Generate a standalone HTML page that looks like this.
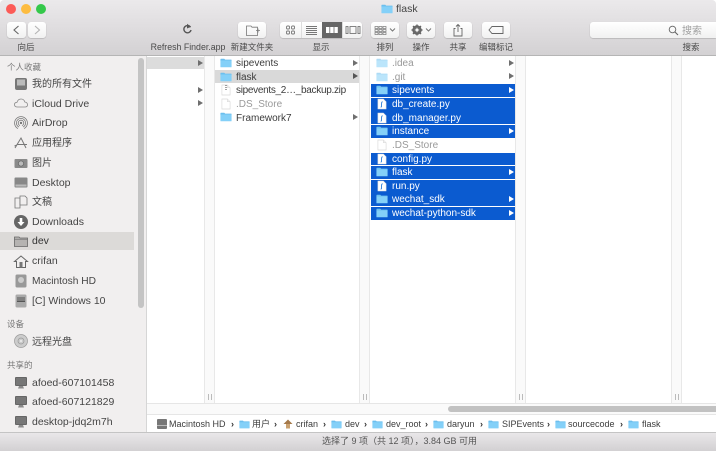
<!DOCTYPE html>
<html><head><meta charset="utf-8"><style>
*{box-sizing:border-box}
html,body{margin:0;padding:0}
html{background:#fff}
body{width:716px;height:451px;overflow:hidden;position:relative;background:#fff;font-family:"Liberation Sans","Noto Sans CJK SC",sans-serif;color:#333;filter:blur(.3px)}
.a{position:absolute}
.t{position:absolute;white-space:nowrap;font-size:10px;line-height:14px;color:#3c3c3c;margin-top:1px}
.tb{position:absolute;white-space:nowrap;font-size:8.5px;line-height:12px;color:#4a4a4a;transform:translateX(-50%)}
.btn{position:absolute;background:linear-gradient(#fff,#f1f1f1);border-radius:3px;box-shadow:0 0.5px 1px rgba(0,0,0,.25);top:22px;height:16px}
.s{position:absolute;left:32px;white-space:nowrap;font-size:10.5px;line-height:14px;color:#454545}
.z{font-size:10px;margin-top:1px}
.h{position:absolute;left:7px;white-space:nowrap;font-size:8.5px;line-height:12px;color:#777}
.sel{position:absolute;left:371px;width:144px;height:12.5px;background:#0b5bd0}
.w{color:#fff}
.ar{position:absolute;width:0;height:0;border-left:5px solid #6f6f6f;border-top:3px solid transparent;border-bottom:3px solid transparent}
.ic{position:absolute;overflow:visible}
.p{position:absolute;top:418px;white-space:nowrap;font-size:9px;line-height:13px;color:#3c3c3c}
.c{position:absolute;top:419px;font-size:9px;line-height:10px;color:#333;font-weight:bold}
</style></head><body>
<svg width="0" height="0" style="position:absolute"><defs>
<symbol id="f" viewBox="0 0 14 11"><path d="M0.5 2V1.2Q0.5 .5 1.2 .5H5L6 1.6H13Q13.5 1.6 13.5 2.2V3H.5Z" fill="#6cbfee"/><path d="M.5 2.6H13.5V10Q13.5 10.5 13 10.5H1Q.5 10.5 .5 10Z" fill="#84d0f8"/></symbol>
<symbol id="d" viewBox="0 0 11 12"><path d="M1 .5H7L10 3.5V11.5H1Z" fill="#fff" stroke="#d8d8d8" stroke-width=".7"/><path d="M7 .5V3.5H10" fill="#f2f2f2" stroke="#d8d8d8" stroke-width=".6"/></symbol>
<symbol id="py" viewBox="0 0 11 12"><path d="M1 .5H7L10 3.5V11.5H1Z" fill="#fff" stroke="#dcdcdc" stroke-width=".6"/><path d="M6.2 3.5Q5 3.7 5 5.5V8.5Q5 9.5 4 9.3" fill="none" stroke="#2f7fd8" stroke-width="1"/></symbol>
<symbol id="mon" viewBox="0 0 14 14"><rect x="1" y="1" width="12" height="9" rx="1" fill="#666"/><rect x="2" y="2" width="10" height="7" fill="#777"/><path d="M4 12.5H10L9 10H5Z" fill="#8b8b8b"/></symbol>
</defs></svg>

<!-- toolbar -->
<div class="a" style="left:0;top:0;width:716px;height:56px;background:linear-gradient(#ebe9eb,#d3d1d3);border-bottom:1px solid #b5b5b5;border-radius:4px 4px 0 0"></div>
<div class="a" style="left:6px;top:4px;width:10px;height:10px;border-radius:50%;background:#fc5b57"></div>
<div class="a" style="left:21px;top:4px;width:10px;height:10px;border-radius:50%;background:#fdbc40"></div>
<div class="a" style="left:36px;top:4px;width:10px;height:10px;border-radius:50%;background:#34c84a"></div>
<svg class="ic" style="left:381px;top:4px" width="12" height="10"><use href="#f" width="12" height="10"/></svg>
<div class="t" style="left:396px;top:1px;font-size:10.5px;color:#444">flask</div>

<div class="btn" style="left:7px;width:19px"></div>
<div class="btn" style="left:27.5px;width:18px"></div>
<svg class="ic" style="left:7px;top:22px" width="40" height="16"><path d="M11.5 4L7 8L11.5 12" fill="none" stroke="#666" stroke-width="1.1"/><path d="M28 4L32.5 8L28 12" fill="none" stroke="#b4b4b4" stroke-width="1.1"/></svg>
<div class="tb" style="left:26px;top:41px">向后</div>

<svg class="ic" style="left:182px;top:23px" width="11" height="12"><path d="M8.5 4.2A3.6 3.6 0 1 0 9 7" fill="none" stroke="#555" stroke-width="1.4"/><path d="M5 .8L9 3.8L5 5.5Z" fill="#555"/></svg>
<div class="tb" style="left:188px;top:41px;font-size:8.8px">Refresh Finder.app</div>

<div class="btn" style="left:238px;width:28px"></div>
<svg class="ic" style="left:246px;top:25px" width="15" height="11"><path d="M.5 10.5V1H5L6 2.2H11.5V10.5Z" fill="none" stroke="#777" stroke-width=".8"/><path d="M10 5.5H14M12 3.5V7.5" stroke="#777" stroke-width=".8"/></svg>
<div class="tb" style="left:252px;top:41px">新建文件夹</div>

<div class="a" style="left:280px;top:22px;width:82px;height:16px;background:linear-gradient(#fff,#f1f1f1);border-radius:3px;box-shadow:0 0.5px 1px rgba(0,0,0,.25)"></div>
<div class="a" style="left:322px;top:22px;width:20px;height:16px;background:#666"></div>
<div class="a" style="left:301px;top:22px;width:1px;height:16px;background:#ddd"></div>
<div class="a" style="left:342px;top:22px;width:1px;height:16px;background:#ddd"></div>
<svg class="ic" style="left:280px;top:22px" width="82" height="16">
<g fill="none" stroke="#777" stroke-width=".9"><rect x="6.5" y="4" width="3" height="3" rx="1"/><rect x="11.5" y="4" width="3" height="3" rx="1"/><rect x="6.5" y="9" width="3" height="3" rx="1"/><rect x="11.5" y="9" width="3" height="3" rx="1"/>
<path d="M26 4.5H37M26 6.5H37M26 8.5H37M26 10.5H37M26 12.5H37"/>
<rect x="66" y="4.5" width="2" height="7"/><rect x="70" y="4.5" width="6" height="7"/><rect x="78" y="4.5" width="2" height="7"/></g>
<g fill="#fff"><rect x="46" y="5" width="3.4" height="6"/><rect x="50.2" y="5" width="3.4" height="6"/><rect x="54.4" y="5" width="3.4" height="6"/></g></svg>
<div class="tb" style="left:321px;top:41px">显示</div>

<div class="btn" style="left:371px;width:28px"></div>
<svg class="ic" style="left:371px;top:22px" width="28" height="16"><g fill="none" stroke="#777" stroke-width=".7"><rect x="4" y="4.5" width="3" height="2"/><rect x="8" y="4.5" width="3" height="2"/><rect x="12" y="4.5" width="3" height="2"/><rect x="4" y="7.5" width="3" height="2"/><rect x="8" y="7.5" width="3" height="2"/><rect x="12" y="7.5" width="3" height="2"/><rect x="4" y="10.5" width="3" height="2"/><rect x="8" y="10.5" width="3" height="2"/><rect x="12" y="10.5" width="3" height="2"/><path d="M19 6.5L21.5 9L24 6.5" stroke-width="1"/></g></svg>
<div class="tb" style="left:385px;top:41px">排列</div>

<div class="btn" style="left:407px;width:28px"></div>
<svg class="ic" style="left:407px;top:22px" width="28" height="16"><circle cx="10" cy="8" r="3.6" fill="none" stroke="#666" stroke-width="2.2"/><path d="M10 2.5V13.5M4.5 8H15.5M6 4L14 12M14 4L6 12" stroke="#666" stroke-width="1.4"/><circle cx="10" cy="8" r="1.6" fill="#f6f6f6"/><path d="M19 6.5L21.5 9L24 6.5" fill="none" stroke="#777"/></svg>
<div class="tb" style="left:421px;top:41px">操作</div>

<div class="btn" style="left:444px;width:28px"></div>
<svg class="ic" style="left:444px;top:22px" width="28" height="16"><path d="M11.5 6.5H10V14H18V6.5H16.5M14 10V2.5M12 4.5L14 2.5L16 4.5" fill="none" stroke="#666" stroke-width=".9"/></svg>
<div class="tb" style="left:458px;top:41px">共享</div>

<div class="btn" style="left:482px;width:28px"></div>
<svg class="ic" style="left:482px;top:22px" width="28" height="16"><path d="M10 4.5H21V11.5H10L7 8Z" fill="none" stroke="#666" stroke-width=".9"/></svg>
<div class="tb" style="left:496px;top:41px">编辑标记</div>

<div class="btn" style="left:590px;width:126px;border-radius:3px 0 0 3px"></div>
<svg class="ic" style="left:668px;top:25px" width="11" height="11"><circle cx="4.5" cy="4.5" r="3.3" fill="none" stroke="#666" stroke-width=".9"/><path d="M7 7L10 10" stroke="#666" stroke-width="1.1"/></svg>
<div class="t" style="left:682px;top:24px;color:#a0a0a0">搜索</div>
<div class="tb" style="left:691px;top:41px">搜索</div>

<!-- sidebar -->
<div class="a" style="left:0;top:56px;width:147px;height:395px;background:#f1efef"></div>
<div class="a" style="left:0;top:232px;width:134px;height:18px;background:#dcdad8"></div>
<div class="a" style="left:138px;top:58px;width:6px;height:250px;border-radius:3px;background:#c4c4c4"></div>
<div class="h" style="left:7px;top:61px">个人收藏</div>

<svg class="ic" style="left:14px;top:77px" width="14" height="14"><rect x="1" y="1" width="12" height="12" rx="2" fill="#777"/><rect x="3" y="2.5" width="8" height="6" fill="#bbb"/></svg>
<div class="s z" style="top:77px">我的所有文件</div>
<svg class="ic" style="left:14px;top:98px" width="14" height="10"><path d="M3.5 9Q.5 9 .5 6.5Q.5 4.5 3 4.3Q4 1 7 1Q10 1 10.8 4Q13.5 4.5 13.5 6.7Q13.5 9 11 9Z" fill="none" stroke="#888" stroke-width=".8"/></svg>
<div class="s" style="top:97px">iCloud Drive</div>
<svg class="ic" style="left:14px;top:116px" width="14" height="14"><g fill="none" stroke="#777" stroke-width=".8"><circle cx="7" cy="7" r="6.4"/><circle cx="7" cy="7" r="4.6"/><circle cx="7" cy="7" r="2.8"/></g><circle cx="7" cy="7" r="1.2" fill="#777"/><path d="M3 14L7 8L11 14Z" fill="#f1efef"/></svg>
<div class="s" style="top:116px">AirDrop</div>
<svg class="ic" style="left:14px;top:136px" width="14" height="14"><path d="M1 12L7 2L12 12M3 8.5H13M.5 10L3 9" fill="none" stroke="#777" stroke-width="1"/></svg>
<div class="s z" style="top:136px">应用程序</div>
<svg class="ic" style="left:14px;top:158px" width="14" height="10"><rect x=".5" y="1" width="13" height="9" rx="1" fill="#8a8a8a"/><circle cx="7" cy="5.5" r="2.6" fill="#bbb" stroke="#666" stroke-width=".7"/></svg>
<div class="s z" style="top:156px">图片</div>
<svg class="ic" style="left:14px;top:177px" width="14" height="11"><rect x=".5" y=".5" width="13" height="10" rx="1" fill="#888"/><rect x="1.5" y="7.5" width="11" height="2" fill="#bbb"/></svg>
<div class="s" style="top:176px">Desktop</div>
<svg class="ic" style="left:14px;top:195px" width="14" height="14"><path d="M1 3H6V13H1Z" fill="none" stroke="#777" stroke-width=".8"/><path d="M6 1H11L13 3V10H6Z" fill="#f1efef" stroke="#777" stroke-width=".8"/></svg>
<div class="s z" style="top:195px">文稿</div>
<svg class="ic" style="left:14px;top:215px" width="14" height="14"><circle cx="7" cy="7" r="7" fill="#666"/><path d="M5.7 3H8.3V7H10.5L7 11L3.5 7H5.7Z" fill="#fff"/></svg>
<div class="s" style="top:215px">Downloads</div>
<svg class="ic" style="left:14px;top:236px" width="14" height="11"><path d="M.5 10.5V1H5L6 2H13.5V10.5Z" fill="#b5b3b1" stroke="#666" stroke-width=".8"/><path d="M.5 3.2H13.5" stroke="#666" stroke-width=".6"/></svg>
<div class="s" style="top:234px;color:#333">dev</div>
<svg class="ic" style="left:14px;top:255px" width="14" height="13"><path d="M7 1L.5 6.5H2.5V12.5H11.5V6.5H13.5Z" fill="none" stroke="#666" stroke-width="1"/><rect x="5.5" y="7" width="3" height="5.5" fill="#777"/></svg>
<div class="s" style="top:254px">crifan</div>
<svg class="ic" style="left:15px;top:274px" width="12" height="14"><rect x=".5" y=".5" width="11" height="13" rx="1.5" fill="#999"/><circle cx="6" cy="6" r="3" fill="#ccc"/></svg>
<div class="s" style="top:275px;font-size:10.2px">Macintosh HD</div>
<svg class="ic" style="left:15px;top:294px" width="12" height="14"><rect x=".5" y=".5" width="11" height="13" rx="1.5" fill="#aaa"/><path d="M3 3V7M5 3V7M7 3V7M9 3V7" stroke="#555"/><rect x="2" y="7" width="8" height="1" fill="#555"/></svg>
<div class="s" style="top:294px">[C] Windows 10</div>
<div class="h" style="top:318px">设备</div>
<svg class="ic" style="left:14px;top:334px" width="14" height="14"><circle cx="7" cy="7" r="6.5" fill="#ccc" stroke="#999" stroke-width=".7"/><circle cx="7" cy="7" r="3" fill="none" stroke="#999" stroke-width=".7"/><circle cx="7" cy="7" r="1" fill="#eee"/></svg>
<div class="s z" style="top:335px">远程光盘</div>
<div class="h" style="top:359px">共享的</div>
<svg class="ic" style="left:14px;top:376px" width="14" height="14"><use href="#mon" width="14" height="14"/></svg>
<div class="s" style="top:376px">afoed-607101458</div>
<svg class="ic" style="left:14px;top:395px" width="14" height="14"><use href="#mon" width="14" height="14"/></svg>
<div class="s" style="top:395px">afoed-607121829</div>
<svg class="ic" style="left:14px;top:415px" width="14" height="14"><use href="#mon" width="14" height="14"/></svg>
<div class="s" style="top:415px">desktop-jdq2m7h</div>

<!-- columns -->
<div class="a" style="left:147px;top:56px;width:569px;height:347px;background:#fff"></div>
<div class="a" style="left:146px;top:56px;width:1px;height:376px;background:#d6d6d6"></div>
<div class="a" style="left:147px;top:57px;width:58px;height:12px;background:#dcdcdc"></div>
<div class="a" style="left:215px;top:70px;width:145px;height:13px;background:#d9d9d9"></div>

<div class="a" style="left:204px;top:56px;width:11px;height:347px;background:#fafafa;border-left:1px solid #e8e8e8;border-right:1px solid #e8e8e8"></div>
<div class="a" style="left:359px;top:56px;width:11px;height:347px;background:#fafafa;border-left:1px solid #e8e8e8;border-right:1px solid #e8e8e8"></div>
<div class="a" style="left:515px;top:56px;width:11px;height:347px;background:#fafafa;border-left:1px solid #e8e8e8;border-right:1px solid #e8e8e8"></div>
<div class="a" style="left:671px;top:56px;width:11px;height:347px;background:#fafafa;border-left:1px solid #e8e8e8;border-right:1px solid #e8e8e8"></div>
<svg class="ic" style="left:204px;top:393px" width="480" height="8"><g stroke="#bbb"><path d="M4.5 1V7M7.5 1V7M159.5 1V7M162.5 1V7M315.5 1V7M318.5 1V7M471.5 1V7M474.5 1V7"/></g></svg>

<div class="ar" style="left:198px;top:60px"></div>
<div class="ar" style="left:198px;top:87px"></div>
<div class="ar" style="left:198px;top:100px"></div>

<svg class="ic" style="left:220px;top:58px" width="12" height="10"><use href="#f" width="12" height="10"/></svg>
<div class="t" style="left:236px;top:56px">sipevents</div><div class="ar" style="left:353px;top:60px"></div>
<svg class="ic" style="left:220px;top:72px" width="12" height="10"><use href="#f" width="12" height="10"/></svg>
<div class="t" style="left:236px;top:70px">flask</div><div class="ar" style="left:353px;top:73px;border-left-color:#555"></div>
<svg class="ic" style="left:221px;top:84px" width="10" height="12"><use href="#d" width="10" height="12"/><path d="M5 1V6" stroke="#444" stroke-width="1" stroke-dasharray="1 1"/></svg>
<div class="t" style="left:236px;top:83px;letter-spacing:-.3px">sipevents_2…_backup.zip</div>
<svg class="ic" style="left:221px;top:98px" width="10" height="12"><use href="#d" width="10" height="12"/></svg>
<div class="t" style="left:236px;top:97px;color:#999">.DS_Store</div>
<svg class="ic" style="left:220px;top:112px" width="12" height="10"><use href="#f" width="12" height="10"/></svg>
<div class="t" style="left:236px;top:111px">Framework7</div><div class="ar" style="left:353px;top:114px"></div>

<!-- column 3 -->
<svg class="ic" style="left:376px;top:58px;opacity:.55" width="12" height="10"><use href="#f" width="12" height="10"/></svg>
<div class="t" style="left:392px;top:56px;color:#999">.idea</div><div class="ar" style="left:509px;top:60px"></div>
<svg class="ic" style="left:376px;top:72px;opacity:.55" width="12" height="10"><use href="#f" width="12" height="10"/></svg>
<div class="t" style="left:392px;top:70px;color:#999">.git</div><div class="ar" style="left:509px;top:73px"></div>

<div class="sel" style="top:84px"></div><svg class="ic" style="left:376px;top:85px" width="12" height="10"><use href="#f" width="12" height="10"/></svg>
<div class="t w" style="left:392px;top:83px">sipevents</div><div class="ar" style="left:509px;top:87px;border-left-color:#fff"></div>
<div class="sel" style="top:98px"></div><svg class="ic" style="left:377px;top:98px" width="10" height="12"><use href="#py" width="10" height="12"/></svg>
<div class="t w" style="left:392px;top:97px">db_create.py</div>
<div class="sel" style="top:111px"></div><svg class="ic" style="left:377px;top:112px" width="10" height="12"><use href="#py" width="10" height="12"/></svg>
<div class="t w" style="left:392px;top:111px">db_manager.py</div>
<div class="sel" style="top:125px"></div><svg class="ic" style="left:376px;top:126px" width="12" height="10"><use href="#f" width="12" height="10"/></svg>
<div class="t w" style="left:392px;top:124px">instance</div><div class="ar" style="left:509px;top:128px;border-left-color:#fff"></div>
<svg class="ic" style="left:377px;top:139px" width="10" height="12"><use href="#d" width="10" height="12"/></svg>
<div class="t" style="left:392px;top:138px;color:#999">.DS_Store</div>
<div class="sel" style="top:152.5px"></div><svg class="ic" style="left:377px;top:153px" width="10" height="12"><use href="#py" width="10" height="12"/></svg>
<div class="t w" style="left:392px;top:152px">config.py</div>
<div class="sel" style="top:166px"></div><svg class="ic" style="left:376px;top:167px" width="12" height="10"><use href="#f" width="12" height="10"/></svg>
<div class="t w" style="left:392px;top:165px">flask</div><div class="ar" style="left:509px;top:169px;border-left-color:#fff"></div>
<div class="sel" style="top:180px"></div><svg class="ic" style="left:377px;top:180px" width="10" height="12"><use href="#py" width="10" height="12"/></svg>
<div class="t w" style="left:392px;top:179px">run.py</div>
<div class="sel" style="top:193px"></div><svg class="ic" style="left:376px;top:194px" width="12" height="10"><use href="#f" width="12" height="10"/></svg>
<div class="t w" style="left:392px;top:192px">wechat_sdk</div><div class="ar" style="left:509px;top:196px;border-left-color:#fff"></div>
<div class="sel" style="top:207px"></div><svg class="ic" style="left:376px;top:208px" width="12" height="10"><use href="#f" width="12" height="10"/></svg>
<div class="t w" style="left:392px;top:206px">wechat-python-sdk</div><div class="ar" style="left:509px;top:210px;border-left-color:#fff"></div>

<!-- scroll track -->
<div class="a" style="left:147px;top:403px;width:569px;height:12px;background:#fafafa;border-top:1px solid #e6e6e6;border-bottom:1px solid #e6e6e6"></div>
<div class="a" style="left:448px;top:406px;width:268px;height:6px;border-radius:3px 0 0 3px;background:#c2c2c2"></div>

<!-- path bar -->
<div class="a" style="left:147px;top:415px;width:569px;height:17px;background:#fff"></div>
<svg class="ic" style="left:157px;top:419px" width="10" height="10"><rect width="10" height="10" rx="1" fill="#777"/><rect y="6" width="10" height="1" fill="#bbb"/></svg>
<div class="p" style="left:169px">Macintosh HD</div><div class="c" style="left:231px">›</div>
<svg class="ic" style="left:239px;top:419.5px" width="11" height="9"><use href="#f" width="11" height="9"/></svg>
<div class="p" style="left:252px">用户</div><div class="c" style="left:274px">›</div>
<svg class="ic" style="left:283px;top:419px" width="10" height="10"><path d="M5 .5L.5 5H9.5Z" fill="#a5794a"/><rect x="3" y="5" width="4" height="4.5" fill="#c9a06e"/></svg>
<div class="p" style="left:296px">crifan</div><div class="c" style="left:323px">›</div>
<svg class="ic" style="left:331px;top:419.5px" width="11" height="9"><use href="#f" width="11" height="9"/></svg>
<div class="p" style="left:345px">dev</div><div class="c" style="left:364px">›</div>
<svg class="ic" style="left:372px;top:419.5px" width="11" height="9"><use href="#f" width="11" height="9"/></svg>
<div class="p" style="left:386px">dev_root</div><div class="c" style="left:425px">›</div>
<svg class="ic" style="left:433px;top:419.5px" width="11" height="9"><use href="#f" width="11" height="9"/></svg>
<div class="p" style="left:447px">daryun</div><div class="c" style="left:480px">›</div>
<svg class="ic" style="left:488px;top:419.5px" width="11" height="9"><use href="#f" width="11" height="9"/></svg>
<div class="p" style="left:502px">SIPEvents</div><div class="c" style="left:547px">›</div>
<svg class="ic" style="left:555px;top:419.5px" width="11" height="9"><use href="#f" width="11" height="9"/></svg>
<div class="p" style="left:568px">sourcecode</div><div class="c" style="left:620px">›</div>
<svg class="ic" style="left:628px;top:419.5px" width="11" height="9"><use href="#f" width="11" height="9"/></svg>
<div class="p" style="left:642px">flask</div>

<!-- status bar -->
<div class="a" style="left:0;top:432px;width:716px;height:19px;background:linear-gradient(#e9e7e9,#d2d0d2);border-top:1px solid #c4c4c4"></div>
<div class="t" style="left:322px;top:434px;font-size:9px;line-height:13px;color:#555">选择了 9 项（共 12 项），3.84 GB 可用</div>
</body></html>
